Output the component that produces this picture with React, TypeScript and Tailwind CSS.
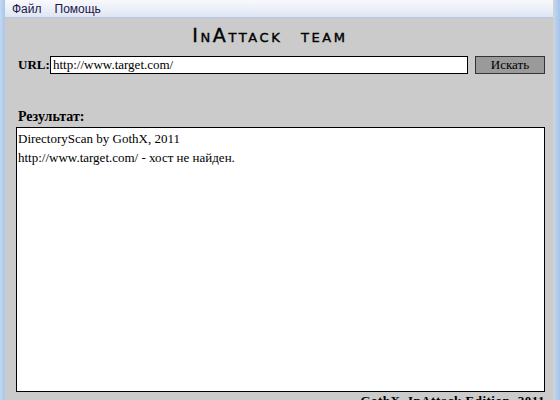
export default function App() {
  return (
    <div className="flex h-[400px] w-[560px] overflow-hidden bg-[#cbcbcb]">
      {/* window frame, left */}
      <div className="w-[5px] shrink-0 bg-gradient-to-r from-[#c4d8f0] to-[#a9c6ea]" />

      <div className="flex min-w-0 flex-1 flex-col">
        {/* menu */}
        <div className="flex h-[18px] shrink-0 items-center gap-[13px] border-b border-[#b7c7e3] bg-gradient-to-b from-[#f8f9fc] to-[#dfe6f3] pl-[7px] font-['Liberation_Sans',sans-serif] text-[12px] text-[#221548]">
          <span>Файл</span>
          <span>Помощь</span>
        </div>

        <div className="flex h-[38px] shrink-0 items-start justify-center pt-[8px] pr-[18px]">
          <h1 className="font-['DejaVu_Sans',sans-serif] text-[19px] leading-none font-normal tracking-[2.6px] [font-variant:small-caps] [word-spacing:10px] text-black [-webkit-text-stroke:0.4px_black]">
            InAttack team
          </h1>
        </div>

        {/* url row */}
        <div className="flex h-[18px] shrink-0 items-center pl-[13px] font-['Liberation_Serif',serif] text-[13px]">
          <span className="w-[32px] font-bold">URL:</span>
          <div className="flex h-[18px] w-[418px] items-center border border-black bg-white pl-[2px]">
            http://www.target.com/
          </div>
          <button className="ml-[7px] flex h-[18px] w-[70px] items-center justify-center border border-[#333] bg-[#9a9a9a] pb-px">
            Искать
          </button>
        </div>

        <div className="flex h-[53px] shrink-0 items-end pb-[3px] pl-[13px] font-['Liberation_Serif',serif] text-[14px] font-bold leading-none">
          Результат:
        </div>

        {/* output */}
        <div className="ml-[11px] mr-[8px] h-[265px] shrink-0 border border-black bg-white px-[1px] pt-[1px] font-['Liberation_Serif',serif] text-[13px] leading-[19px] text-black">
          <div>DirectoryScan by GothX, 2011</div>
          <div>http://www.target.com/ - хост не найден.</div>
        </div>

        <div className="flex justify-end pr-[8px] pt-[2px] font-['Liberation_Serif',serif] text-[13px] font-bold leading-none tracking-[0.5px]">
          GothX, InAttack Edition, 2011
        </div>
      </div>

      {/* window frame, right */}
      <div className="w-[7px] shrink-0 border-l border-[#d6d2c4] bg-gradient-to-r from-[#c0d5ef] to-[#a7c3e8]" />
    </div>
  );
}
